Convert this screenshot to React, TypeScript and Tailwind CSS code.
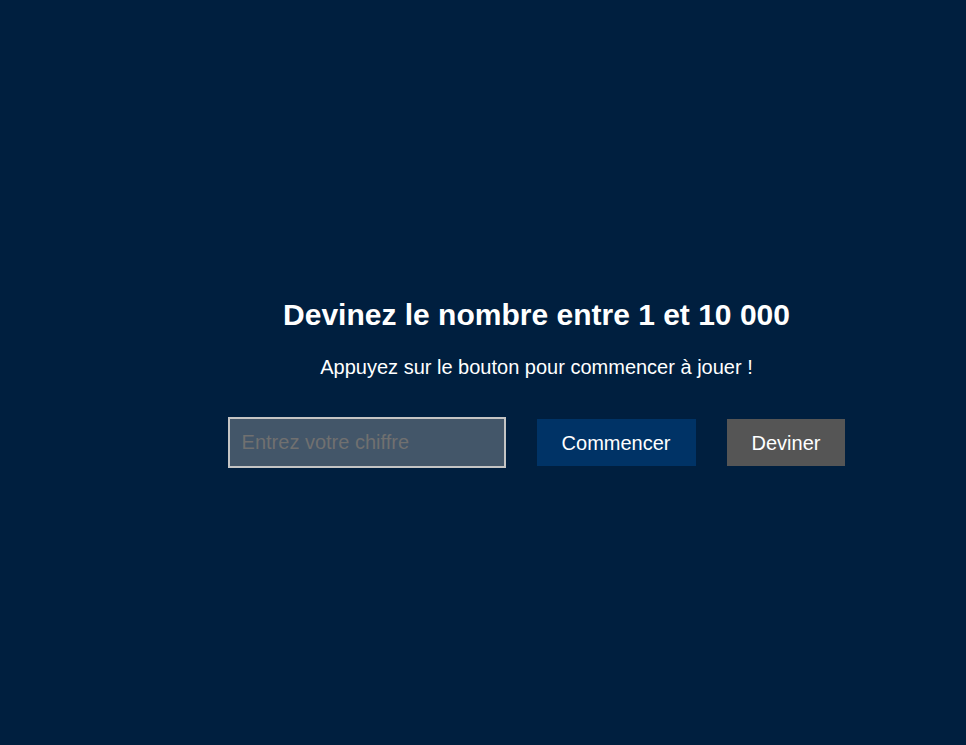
export default function App() {
  return (
    <div
      className="min-h-screen w-full bg-[#001f3f] text-white flex flex-col items-center pl-[107px] pt-[298px]"
      style={{ fontFamily: '"Liberation Sans", Arial, sans-serif' }}
    >
      <h1 className="text-[30px] leading-[34px] font-bold">Devinez le nombre entre 1 et 10 000</h1>
      <p className="mt-[24px] text-[20px] leading-[23px]">Appuyez sur le bouton pour commencer à jouer !</p>
      <div className="mt-[38px] flex items-center gap-[31px]">
        <input
          type="text"
          placeholder="Entrez votre chiffre"
          className="w-[278px] h-[51px] px-[12px] border-2 border-[#c4c4c4] bg-[#435669] text-[20px] text-white placeholder:text-[#707070] outline-none"
        />
        <button className="h-[47px] px-[25px] bg-[#003366] text-[20px] text-white">Commencer</button>
        <button className="h-[47px] px-[25px] bg-[#555555] text-[20px] text-white">Deviner</button>
      </div>
    </div>
  );
}
